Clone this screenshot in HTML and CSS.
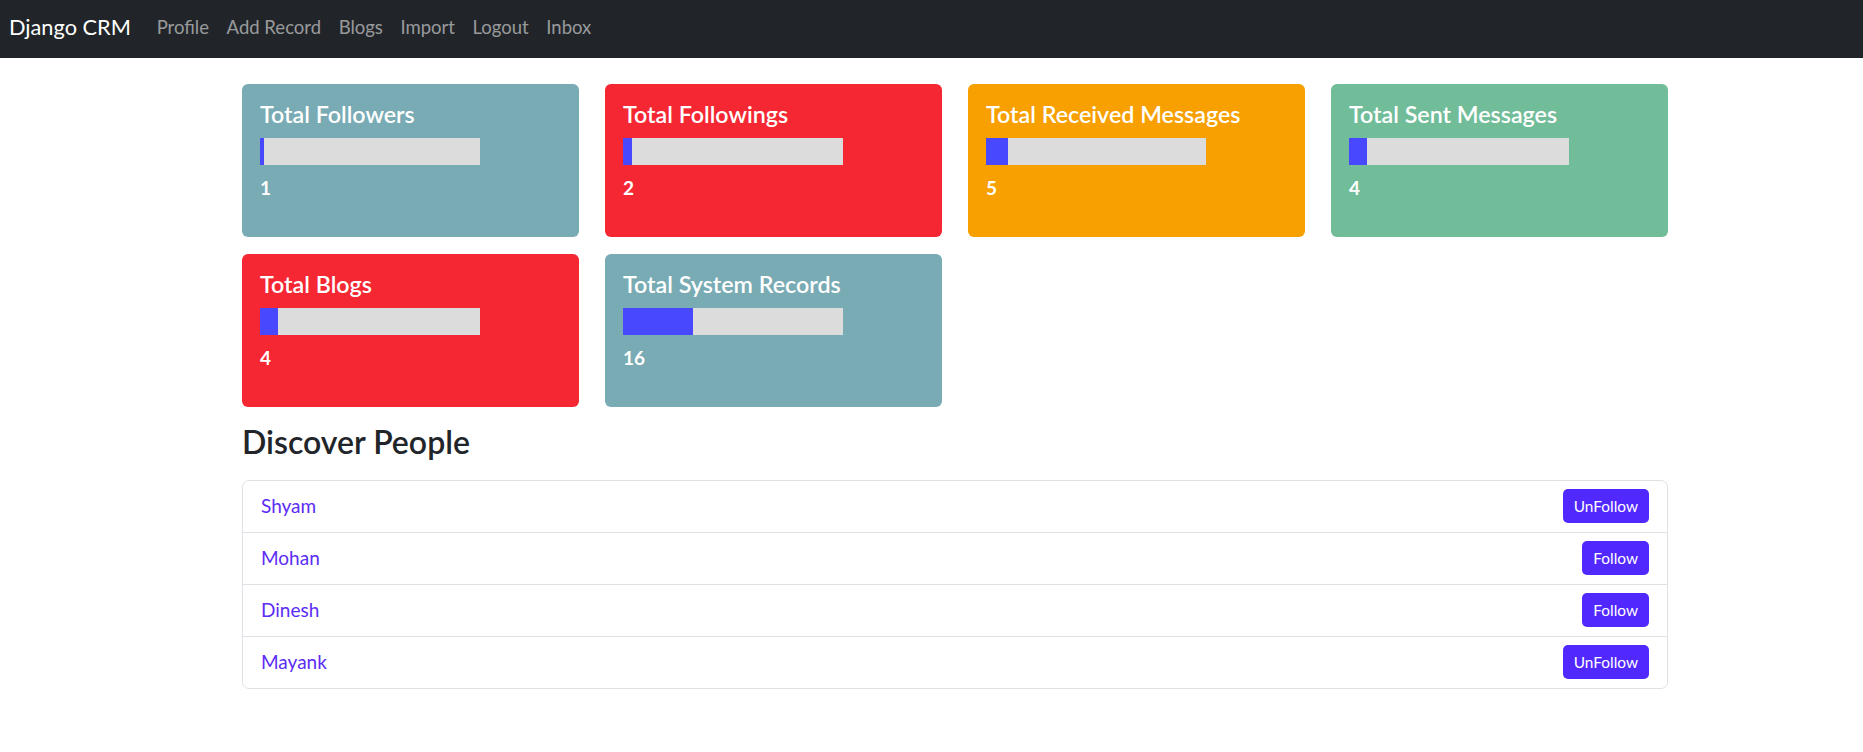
FILE: index.html
```html
<!DOCTYPE html>
<html lang="en">
<head>
<meta charset="utf-8">
<title>Django CRM</title>
<link rel="stylesheet" href="styles.css">
</head>
<body>
<nav class="navbar">
  <a class="brand" href="#">Django CRM</a>
  <ul class="nav">
    <li><a href="#">Profile</a></li>
    <li><a href="#">Add Record</a></li>
    <li><a href="#">Blogs</a></li>
    <li><a href="#">Import</a></li>
    <li><a href="#">Logout</a></li>
    <li><a href="#">Inbox</a></li>
  </ul>
</nav>
<main class="container">
  <section class="stats">
    <div class="card teal">
      <h5 class="card-title">Total Followers</h5>
      <div class="bar"><div class="fill" style="width: 2%"></div></div>
      <p class="count">1</p>
    </div>
    <div class="card red">
      <h5 class="card-title">Total Followings</h5>
      <div class="bar"><div class="fill" style="width: 4%"></div></div>
      <p class="count">2</p>
    </div>
    <div class="card orange">
      <h5 class="card-title">Total Received Messages</h5>
      <div class="bar"><div class="fill" style="width: 10%"></div></div>
      <p class="count">5</p>
    </div>
    <div class="card green">
      <h5 class="card-title">Total Sent Messages</h5>
      <div class="bar"><div class="fill" style="width: 8%"></div></div>
      <p class="count">4</p>
    </div>
    <div class="card red">
      <h5 class="card-title">Total Blogs</h5>
      <div class="bar"><div class="fill" style="width: 8%"></div></div>
      <p class="count">4</p>
    </div>
    <div class="card teal">
      <h5 class="card-title">Total System Records</h5>
      <div class="bar"><div class="fill" style="width: 32%"></div></div>
      <p class="count">16</p>
    </div>
  </section>
  <h4 class="section-title">Discover People</h4>
  <ul class="people">
    <li class="person"><a href="#">Shyam</a><button class="btn">UnFollow</button></li>
    <li class="person"><a href="#">Mohan</a><button class="btn">Follow</button></li>
    <li class="person"><a href="#">Dinesh</a><button class="btn">Follow</button></li>
    <li class="person"><a href="#">Mayank</a><button class="btn">UnFollow</button></li>
  </ul>
</main>
</body>
</html>
```
FILE: styles.css
```css
* { box-sizing: border-box; }
html, body { margin: 0; padding: 0; }
body {
  font-family: Lato, "Open Sans", sans-serif;
  color: #212529;
  background: #fff;
}
a { text-decoration: none; }

.navbar {
  height: 58px;
  background: #212529;
  display: flex;
  align-items: center;
  padding: 0 9px 4px;
}
.brand {
  color: #fff;
  font-size: 21.75px;
  line-height: 28px;
  margin-right: 17px;
}
.nav {
  list-style: none;
  margin: 0;
  padding: 0;
  display: flex;
}
.nav a {
  display: block;
  color: rgba(255, 255, 255, 0.55);
  font-size: 18.5px;
  line-height: 28px;
  padding: 0 8.8px;
}

.container {
  width: 1426px;
  margin-left: 242px;
}
.stats {
  margin-top: 26px;
  display: grid;
  grid-template-columns: repeat(4, 337px);
  column-gap: 26px;
  row-gap: 17px;
}
.card {
  border-radius: 6px;
  padding: 16px 18px 37px;
  color: #fff;
}
.teal { background: #79abb4; }
.red { background: #f52733; }
.orange { background: #f7a000; }
.green { background: #71bd9a; }
.card-title {
  margin: 0;
  font-size: 23.25px;
  line-height: 28.5px;
  font-weight: 600;
}
.bar {
  margin-top: 9.5px;
  width: 220px;
  height: 27px;
  background: #dcdcdc;
}
.fill {
  height: 100%;
  background: #4848ff;
}
.count {
  margin: 12px 0 0;
  font-size: 19px;
  line-height: 22.8px;
  font-weight: 700;
}

.section-title {
  margin: 16px 0 20px;
  font-size: 32px;
  line-height: 37px;
  font-weight: 600;
  color: #212529;
}
.people {
  list-style: none;
  margin: 0;
  padding: 0;
  border: 1px solid #dee2e6;
  border-radius: 7px;
}
.person {
  display: flex;
  align-items: center;
  justify-content: space-between;
  padding: 8.5px 18px;
  border-top: 1px solid #dee2e6;
}
.person:first-child { border-top: none; }
.person a {
  color: #5b2cf6;
  font-size: 19px;
  margin-top: -1px;
}
.btn {
  height: 34px;
  padding: 0 11px;
  border: none;
  border-radius: 5px;
  background: #5128fd;
  color: #fff;
  font-family: Lato, "Open Sans", sans-serif;
  font-size: 15.4px;
}
```
